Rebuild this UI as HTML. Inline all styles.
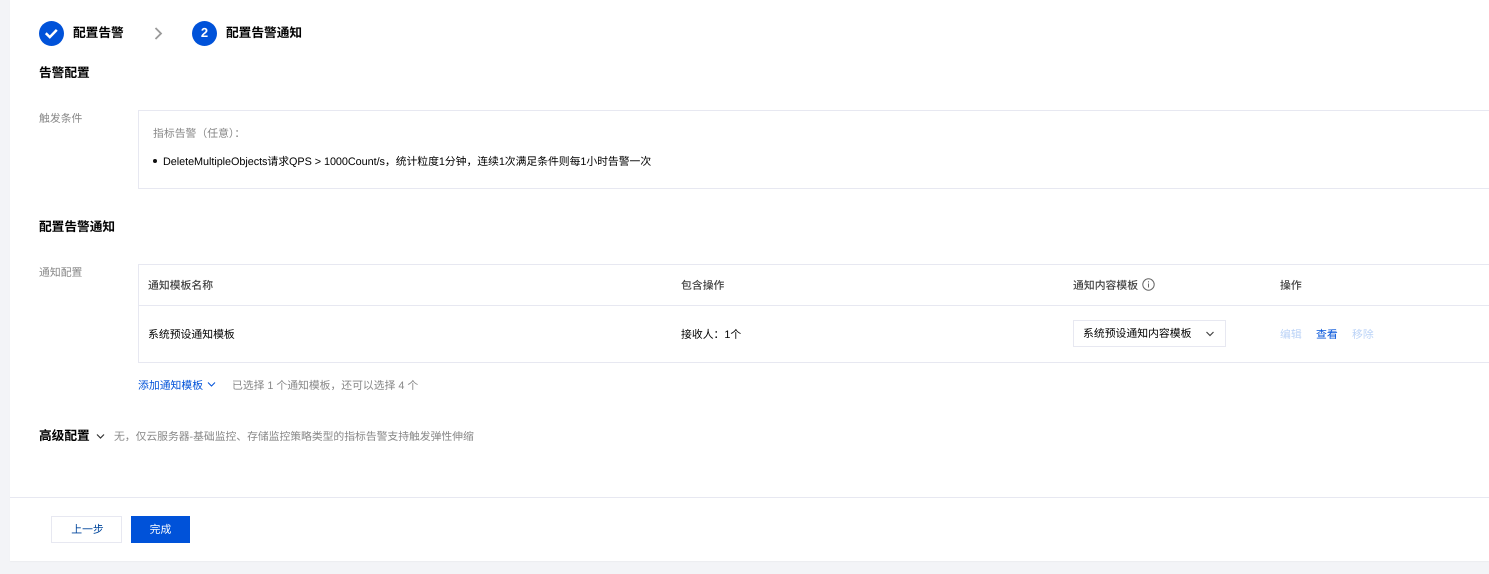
<!DOCTYPE html>
<html lang="zh-CN"><head><meta charset="utf-8"><title>配置告警通知</title>
<style>
html,body{margin:0;padding:0}
body{width:1489px;height:574px;background:#f3f4f7;overflow:hidden;position:relative;font-family:"Liberation Sans","Noto Sans CJK SC",sans-serif;font-size:10.85px;color:#000;text-rendering:geometricPrecision}
#p{position:absolute;left:10px;top:0;width:1479px;height:561px;background:#fff;box-shadow:0 1px 1px rgba(0,0,0,.03)}
.t{position:absolute;white-space:nowrap;line-height:16px}
.b{font-size:12.7px;font-weight:700;color:#000;line-height:18px}
.g{color:#888}
.h{color:#444;font-weight:500}
.box{position:absolute;border:1px solid #e7e8f1;box-sizing:border-box}
.l{position:absolute;background:#e7e8f1;height:1px}
svg{position:absolute}
</style></head><body>
<div id="p"></div>

<svg style="left:39px;top:21px" width="25" height="25" viewBox="0 0 25 25"><circle cx="12.5" cy="12.5" r="12.5" fill="#0052d9"/><path d="M6.800 12.200l4 3.900 7-7.200" fill="none" stroke="#fff" stroke-width="2.500"/></svg>
<div class="t b" style="left:73px;top:24px">配置告警</div>
<svg style="left:153px;top:26px" width="12" height="15" viewBox="0 0 12 15"><path d="M2.500 2l5.500 5.500L2.500 13" fill="none" stroke="#999" stroke-width="1.800"/></svg>
<svg style="left:192px;top:21px" width="25" height="25" viewBox="0 0 25 25"><circle cx="12.5" cy="12.5" r="12.5" fill="#0052d9"/></svg>
<div class="t" style="left:192px;top:24px;width:25px;text-align:center;color:#fff;font-size:13px;font-weight:700;line-height:18px">2</div>
<div class="t b" style="left:226px;top:24px">配置告警通知</div>

<div class="t b" style="left:39px;top:64px">告警配置</div>
<div class="t g" style="left:39px;top:111px">触发条件</div>
<div class="box" style="left:138px;top:110px;width:1360px;height:79px"></div>
<div class="t g" style="left:153px;top:126px">指标告警（任意）：</div>
<div style="position:absolute;left:153px;top:159px;width:4px;height:4px;border-radius:50%;background:#111"></div>
<div class="t" style="left:163px;top:154px;letter-spacing:-.05px">DeleteMultipleObjects请求QPS &gt; 1000Count/s，统计粒度1分钟，连续1次满足条件则每1小时告警一次</div>

<div class="t b" style="left:39px;top:218px">配置告警通知</div>
<div class="t g" style="left:39px;top:265px">通知配置</div>
<div class="box" style="left:138px;top:264px;width:1360px;height:99px"></div>
<div class="l" style="left:138px;top:305px;width:1351px"></div>
<div class="t h" style="left:148px;top:278px">通知模板名称</div>
<div class="t h" style="left:681px;top:278px">包含操作</div>
<div class="t h" style="left:1073px;top:278px">通知内容模板</div>
<svg style="left:1142px;top:278px" width="13" height="13" viewBox="0 0 13 13"><circle cx="6.500" cy="6.500" r="5.700" fill="none" stroke="#666" stroke-width="1"/><path d="M6.500 5.500v4M6.500 3.200v1.200" stroke="#666" stroke-width="1"/></svg>
<div class="t h" style="left:1280px;top:278px">操作</div>

<div class="t" style="left:148px;top:327px">系统预设通知模板</div>
<div class="t" style="left:681px;top:327px">接收人：1个</div>
<div class="box" style="left:1073px;top:320px;width:153px;height:27px"></div>
<div class="t" style="left:1083px;top:326px">系统预设通知内容模板</div>
<svg style="left:1205px;top:330px" width="10" height="8" viewBox="0 0 10 8"><path d="M1.500 2l3.500 3.500L8.500 2" fill="none" stroke="#444" stroke-width="1.200"/></svg>
<div class="t" style="left:1280px;top:327px;color:#bbd3f7">编辑</div>
<div class="t" style="left:1316px;top:327px;color:#0052d9">查看</div>
<div class="t" style="left:1352px;top:327px;color:#bbd3f7">移除</div>

<div class="t" style="left:138px;top:378px;color:#0052d9">添加通知模板</div>
<svg style="left:207px;top:381px" width="9" height="7" viewBox="0 0 9 7"><path d="M1 1.500l3.500 3.500L8 1.500" fill="none" stroke="#0052d9" stroke-width="1"/></svg>
<div class="t g" style="left:232px;top:378px;letter-spacing:-.03px">已选择 1 个通知模板，还可以选择 4 个</div>

<div class="t b" style="left:39px;top:427px">高级配置</div>
<svg style="left:96px;top:433px" width="9" height="7" viewBox="0 0 9 7"><path d="M1 1.500l3.500 3.500L8 1.500" fill="none" stroke="#333" stroke-width="1.200"/></svg>
<div class="t g" style="left:114px;top:429px;letter-spacing:-.05px">无，仅云服务器-基础监控、存储监控策略类型的指标告警支持触发弹性伸缩</div>

<div class="l" style="left:10px;top:497px;width:1479px"></div>
<div class="box" style="left:51px;top:516px;width:71px;height:27px"></div>
<div class="t" style="left:52px;top:522px;width:71px;text-align:center;color:#00469c">上一步</div>
<div style="position:absolute;left:131px;top:516px;width:59px;height:27px;background:#0052d9"></div>
<div class="t" style="left:131px;top:522px;width:59px;text-align:center;color:#fff">完成</div>
</body></html>
